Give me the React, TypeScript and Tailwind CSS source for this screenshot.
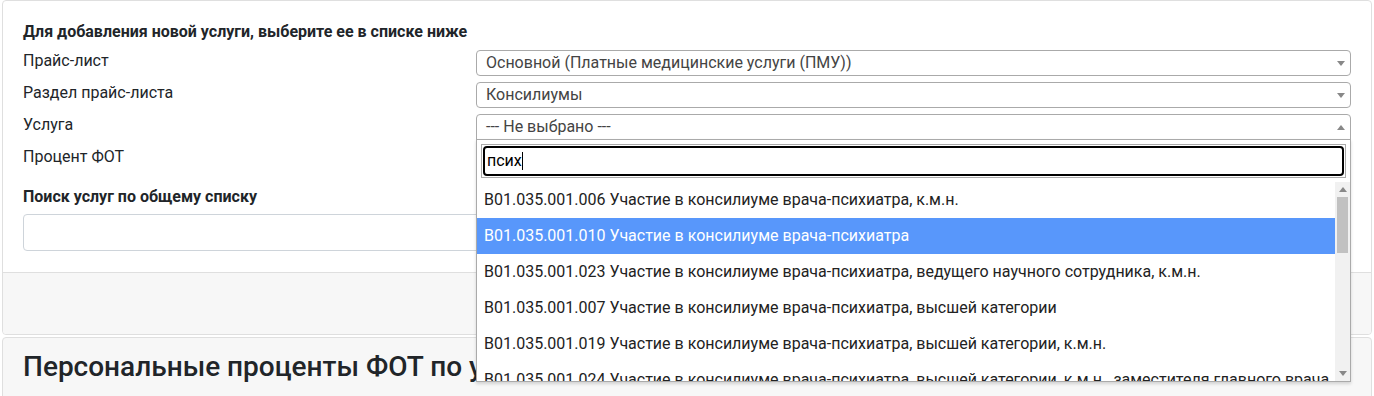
import React from 'react';

const font = { fontFamily: 'Roboto, "Liberation Sans", sans-serif' };

const options = [
  'B01.035.001.006 Участие в консилиуме врача-психиатра, к.м.н.',
  'B01.035.001.010 Участие в консилиуме врача-психиатра',
  'B01.035.001.023 Участие в консилиуме врача-психиатра, ведущего научного сотрудника, к.м.н.',
  'B01.035.001.007 Участие в консилиуме врача-психиатра, высшей категории',
  'B01.035.001.019 Участие в консилиуме врача-психиатра, высшей категории, к.м.н.',
  'B01.035.001.024 Участие в консилиуме врача-психиатра, высшей категории, к.м.н., заместителя главного врача',
];

const Arrow: React.FC<{ up?: boolean }> = ({ up }) =>
  up ? (
    <span className="w-0 h-0 border-l-[4px] border-r-[4px] border-b-[5px] border-l-transparent border-r-transparent border-b-[#888]" />
  ) : (
    <span className="w-0 h-0 border-l-[4px] border-r-[4px] border-t-[5px] border-l-transparent border-r-transparent border-t-[#888]" />
  );

const Select: React.FC<{ value: string; open?: boolean; children?: React.ReactNode }> = ({ value, open, children }) => (
  <div className="relative">
    <div
      className={`h-[26px] border border-[#aaa] bg-white flex items-center justify-between pl-[9px] pr-[5px] text-[16px] text-[#444] ${
        open ? 'rounded-t-[4px]' : 'rounded-[4px]'
      }`}
    >
      <span>{value}</span>
      <Arrow up={open} />
    </div>
    {children}
  </div>
);

const Dropdown: React.FC = () => (
  <div className="absolute left-0 right-0 top-[25px] z-10 bg-white border border-[#aaa] shadow-[0_2px_3px_rgba(0,0,0,0.15)]">
    <div className="p-[4px]">
      <div className="border border-[#aaa] p-px">
        <div className="h-[30px] border-2 border-black rounded-[4px] flex items-center pl-[2px] text-[16px] text-black">
          <span>псих</span>
          <span className="w-px h-[18px] bg-black" />
        </div>
      </div>
    </div>
    <div className="flex h-[199px]">
      <div className="flex-1 overflow-hidden">
        {options.map((o, i) => (
          <div
            key={o}
            className={`h-[36px] shrink-0 flex items-center px-[7px] whitespace-nowrap text-[16px] ${
              i === 1 ? 'bg-[#5897fb] text-white' : 'text-[#222]'
            }`}
          >
            {o}
          </div>
        ))}
      </div>
      <div className="w-[15px] bg-[#f1f1f1] flex flex-col items-center">
        <div className="h-[15px] flex items-center justify-center">
          <Arrow up />
        </div>
        <div className="w-[11px] h-[56px] bg-[#c1c1c1]" />
        <div className="flex-1" />
        <div className="h-[15px] flex items-center justify-center">
          <Arrow />
        </div>
      </div>
    </div>
  </div>
);

const App: React.FC = () => {
  return (
    <div className="bg-white min-h-[396px] px-[2px] text-[#212529]" style={font}>
      <div className="border border-[#dfdfdf] rounded-[4px] overflow-visible">
        <div className="px-[20px] pt-[20px] pb-[21px]">
          <div className="text-[16px] font-bold leading-[21px]">Для добавления новой услуги, выберите ее в списке ниже</div>
          <div className="mt-[8px] grid grid-cols-[453px_1fr] gap-y-[6px] text-[16px]">
            <div className="leading-[22px]">Прайс-лист</div>
            <Select value="Основной (Платные медицинские услуги (ПМУ))" />
            <div className="leading-[22px]">Раздел прайс-листа</div>
            <Select value="Консилиумы" />
            <div className="leading-[22px]">Услуга</div>
            <Select value="--- Не выбрано ---" open>
              <Dropdown />
            </Select>
            <div className="leading-[22px]">Процент ФОТ</div>
            <div className="h-[26px] border border-[#ced4da] rounded-[4px]" />
          </div>
          <div className="mt-[14px] text-[16px] font-bold leading-[22px]">Поиск услуг по общему списку</div>
          <div className="mt-[6px] h-[37px] border border-[#ced4da] rounded-[4px]" />
        </div>
        <div className="h-[62px] bg-[#f7f7f7] border-t border-[#dfdfdf] rounded-b-[4px]" />
      </div>
      <div className="mt-[2px] border border-[#dfdfdf] rounded-t-[4px] bg-[#f7f7f7] h-[80px] px-[20px] pt-[12px]">
        <h3 className="text-[28px] font-medium leading-[34px]">Персональные проценты ФОТ по услугам</h3>
      </div>
    </div>
  );
};

export default App;
